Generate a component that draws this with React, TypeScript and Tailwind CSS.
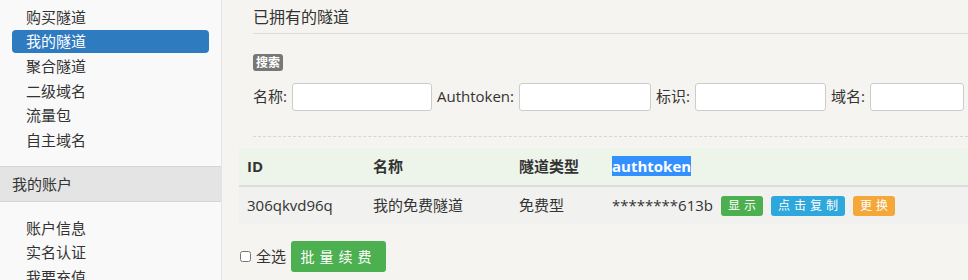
import React from "react";

const FONT = {
  fontFamily: '"Open Sans", "Noto Sans CJK SC", sans-serif',
};

const TUNNEL_LINKS = ["购买隧道", "我的隧道", "聚合隧道", "二级域名", "流量包", "自主域名"];
const ACCOUNT_LINKS = ["账户信息", "实名认证", "我要充值"];

function SideLink({ label, active }: { label: string; active?: boolean }) {
  return (
    <li className="h-[24.6px] px-[12px]">
      <div
        className={
          active
            ? "h-[23px] rounded-[4px] bg-[#2f7bbf] pl-[14px] leading-[23px] text-white"
            : "h-[24.6px] pl-[14px] leading-[24.6px] text-[#333]"
        }
      >
        {label}
      </div>
    </li>
  );
}

function Field({ label, width }: { label: string; width: number }) {
  return (
    <div className="flex shrink-0 items-center gap-[5px]">
      <span className="text-[15px] text-[#333]">{label}</span>
      <input
        className="h-[28px] rounded-[3px] border border-[#ccc] bg-white"
        style={{ width }}
      />
    </div>
  );
}

function TagButton({ label, color }: { label: string; color: string }) {
  return (
    <span
      className={`ml-[8px] inline-block h-[20px] rounded-[3px] pl-[7px] pr-[3px] align-middle text-[12px] leading-[20px] tracking-[4px] text-white ${color}`}
    >
      {label}
    </span>
  );
}

export default function App() {
  return (
    <div className="flex h-[280px] w-[968px] overflow-hidden text-[15px]" style={FONT}>
      <aside className="w-[222px] shrink-0 border-r border-[#e2e2e2] bg-[#f9f9f9]">
        <ul className="pt-[5px]">
          {TUNNEL_LINKS.map((l) => (
            <SideLink key={l} label={l} active={l === "我的隧道"} />
          ))}
        </ul>
        <div className="mt-[13px] h-[36px] border-y border-[#d6d6d6] bg-[#e4e4e4] pl-[12px] leading-[34px] text-[#333]">
          我的账户
        </div>
        <ul className="mt-[14px]">
          {ACCOUNT_LINKS.map((l) => (
            <SideLink key={l} label={l} />
          ))}
        </ul>
      </aside>

      <main className="min-w-0 flex-1 bg-[#f5f4f0] pl-[17px]">
        <div className="pl-[14px]">
          <h2 className="h-[34px] border-b border-[#dcdcdc] pt-[4px] text-[16px] leading-[26px] text-[#333]">
            已拥有的隧道
          </h2>
          <span className="mt-[20px] inline-block h-[17px] rounded-[3px] bg-[#777] px-[3px] text-[12px] font-bold leading-[17px] text-white">
            搜索
          </span>
          <div className="mt-[10px] flex items-center gap-[5px] overflow-hidden whitespace-nowrap">
            <Field label="名称:" width={140} />
            <Field label="Authtoken:" width={132} />
            <Field label="标识:" width={131} />
            <Field label="域名:" width={94} />
            <div className="h-[28px] w-[10px] shrink-0 rounded-l-[3px] bg-[#5cb85c]" />
          </div>
          <div className="mt-[25px] border-t border-dashed border-[#d6d6d6]" />
        </div>

        <table className="mt-[11px] w-full table-fixed border-collapse text-left">
          <colgroup>
            <col className="w-[126px]" />
            <col className="w-[146px]" />
            <col className="w-[93px]" />
            <col />
          </colgroup>
          <thead>
            <tr className="h-[38px] border-b-2 border-[#dcdcdc] bg-[#edf4ea] font-bold text-[#333]">
              <th className="px-[8px]">ID</th>
              <th className="px-[8px]">名称</th>
              <th className="px-[8px]">隧道类型</th>
              <th className="px-[8px]">
                <span className="bg-[#3390ff] text-white">authtoken</span>
              </th>
            </tr>
          </thead>
          <tbody>
            <tr className="h-[38px] bg-[#f1f1f0] text-[#333]">
              <td className="px-[8px]">306qkvd96q</td>
              <td className="px-[8px]">我的免费隧道</td>
              <td className="px-[8px]">免费型</td>
              <td className="whitespace-nowrap px-[8px]">
                <span className="text-[15px]">********613b</span>
                <TagButton label="显示" color="bg-[#4caf50]" />
                <TagButton label="点击复制" color="bg-[#2ea7dc]" />
                <TagButton label="更换" color="bg-[#f4a83a]" />
              </td>
            </tr>
          </tbody>
        </table>

        <div className="mt-[17px] flex items-center pl-[1px]">
          <input type="checkbox" className="h-[11px] w-[11px]" />
          <span className="ml-[5px] text-[#333]">全选</span>
          <button className="ml-[5px] h-[31px] w-[95px] rounded-[3px] bg-[#4caf50] text-[14px] tracking-[5px] text-white">
            批量续费
          </button>
        </div>
      </main>
    </div>
  );
}
